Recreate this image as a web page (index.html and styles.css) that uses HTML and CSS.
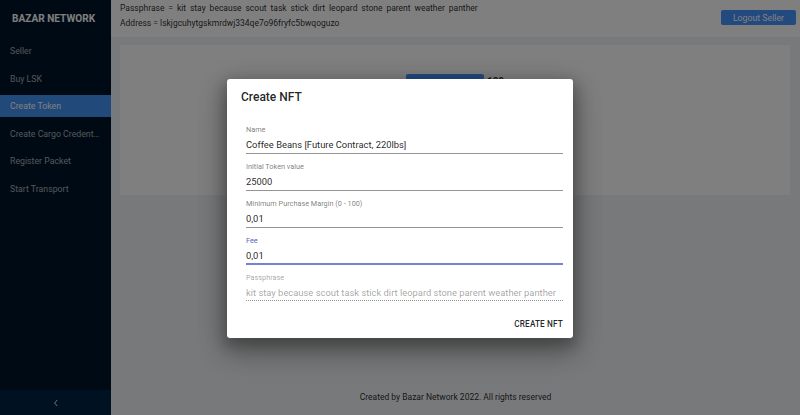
FILE: index.html
```html
<!DOCTYPE html>
<html>
<head>
<meta charset="utf-8">
<link rel="stylesheet" href="styles.css">
</head>
<body>
<div class="layout">
  <aside class="sider">
    <div class="logo">BAZAR NETWORK</div>
    <ul class="menu">
      <li class="item">Seller</li>
      <li class="item">Buy LSK</li>
      <li class="item selected">Create Token</li>
      <li class="item">Create Cargo Credentials</li>
      <li class="item">Register Packet</li>
      <li class="item">Start Transport</li>
    </ul>
    <div class="trigger">
      <svg width="8" height="8" viewBox="0 0 8 8"><path d="M5.2 1 L2.6 4 L5.2 7" fill="none" stroke="#fff" stroke-width="0.9"/></svg>
    </div>
  </aside>
  <div class="main">
    <header class="header">
      <div class="info">
        <div class="line pass">Passphrase = kit stay because scout task stick dirt leopard stone parent weather panther</div>
        <div class="line">Address = lskjgcuhytgskmrdwj334qe7o96fryfc5bwqoguzo</div>
      </div>
      <button class="logout">Logout Seller</button>
    </header>
    <main class="content">
      <div class="card">
        <div class="group">
          <button class="primary"></button>
          <span class="amount">100</span>
        </div>
      </div>
    </main>
    <footer class="footer">Created by Bazar Network 2022. All rights reserved</footer>
  </div>
</div>
<div class="backdrop">
  <div class="dialog">
    <h2 class="title">Create NFT</h2>
    <div class="dcontent">
      <div class="field">
        <div class="label">Name</div>
        <div class="input">Coffee Beans [Future Contract, 220lbs]</div>
      </div>
      <div class="field">
        <div class="label">Initial Token value</div>
        <div class="input">25000</div>
      </div>
      <div class="field">
        <div class="label">Minimum Purchase Margin (0 - 100)</div>
        <div class="input">0,01</div>
      </div>
      <div class="field focused">
        <div class="label">Fee</div>
        <div class="input">0,01</div>
      </div>
      <div class="field disabled">
        <div class="label">Passphrase</div>
        <div class="input">kit stay because scout task stick dirt leopard stone parent weather panther</div>
      </div>
    </div>
    <div class="actions">
      <button class="textbtn">Create NFT</button>
    </div>
  </div>
</div>
</body>
</html>
```
FILE: styles.css
```css
* { box-sizing: border-box; }
html, body { margin: 0; padding: 0; }
body {
  width: 800px;
  height: 415px;
  overflow: hidden;
  font-family: Roboto, "Liberation Sans", sans-serif;
  position: relative;
}
.layout { display: flex; height: 415px; }
.sider {
  width: 111px;
  background: #001529;
  display: flex;
  flex-direction: column;
}
.logo {
  height: 37px;
  padding-left: 12px;
  display: flex;
  align-items: center;
  color: #fff;
  font-weight: 700;
  font-size: 10.1px;
}
.menu { list-style: none; margin: 0; padding: 0; flex: 1; padding-top: 3px; }
.item {
  height: 22px;
  line-height: 22px;
  margin-bottom: 5.5px;
  padding: 0 10px;
  font-size: 8.75px;
  color: rgba(255,255,255,0.65);
  white-space: nowrap;
  overflow: hidden;
  text-overflow: ellipsis;
}
.item.selected { background: #4392f5; color: #fff; }
.trigger {
  height: 25px;
  background: #002244;
  display: flex;
  align-items: center;
  justify-content: center;
}
.main { flex: 1; display: flex; flex-direction: column; background: #f0f2f5; }
.header {
  height: 37px;
  background: #fff;
  display: flex;
  justify-content: space-between;
  padding: 0 4px 0 9px;
}
.info { padding-top: 1px; }
.line {
  font-size: 8.5px;
  color: rgba(0,0,0,0.85);
  line-height: 14.5px;
}
.pass { word-spacing: 1.8px; }
.logout {
  margin-top: 10px;
  width: 75px;
  height: 15px;
  border: 0;
  border-radius: 2px;
  background: #4694ff;
  color: #fff;
  font-family: inherit;
  font-size: 8.75px;
  padding: 0;
}
.content { flex: 1; padding: 8px 10px 0 9px; }
.card {
  height: 150px;
  background: #fff;
  display: flex;
  justify-content: center;
  padding-top: 29px;
}
.group { display: flex; align-items: flex-start; gap: 3px; }
.primary { width: 78px; height: 20px; border: 0; background: #4694ff; border-radius: 2px; }
.amount { font-size: 10px; font-weight: 700; color: rgba(0,0,0,0.85); line-height: 12px; padding-top: 1.5px; }
.footer {
  height: 28px;
  text-align: center;
  font-size: 8.5px;
  line-height: 10px;
  color: rgba(0,0,0,0.85);
  padding-top: 5px;
}
.backdrop {
  position: absolute;
  inset: 0;
  background: rgba(0,0,0,0.5);
  display: flex;
  align-items: center;
  justify-content: center;
  padding-top: 2px;
}
.dialog {
  width: 346px;
  height: 259px;
  background: #fff;
  border-radius: 3px;
  box-shadow: 0 7px 24px 3px rgba(0,0,0,0.25), 0 15px 30px 2px rgba(0,0,0,0.16), 0 6px 12px 3px rgba(0,0,0,0.14);
  display: flex;
  flex-direction: column;
}
.title {
  margin: 0;
  padding: 8px 14px 0;
  font-size: 12px;
  font-weight: 500;
  line-height: 20px;
  color: rgba(0,0,0,0.87);
}
.dcontent { padding: 18px 10px 0 19px; }
.field { margin-bottom: 8px; }
.label {
  font-size: 7.3px;
  line-height: 10px;
  height: 10px;
  color: rgba(0,0,0,0.54);
}
.input {
  font-size: 9.4px;
  line-height: 12px;
  padding: 3.5px 0 2.5px;
  color: rgba(0,0,0,0.87);
  border-bottom: 1px solid rgba(0,0,0,0.42);
  white-space: nowrap;
}
.focused .label { color: #5565c0; }
.focused .input { border-bottom: 2px solid #7382d2; padding-bottom: 1.5px; }
.disabled .label, .disabled .input { color: rgba(0,0,0,0.38); }
.disabled .input { border-bottom: 1px dotted rgba(0,0,0,0.42); padding-bottom: 1px; }
.actions {
  margin-top: auto;
  display: flex;
  justify-content: flex-end;
  padding: 0 5px 4px;
}
.textbtn {
  border: 0;
  background: transparent;
  font-family: inherit;
  font-size: 8.2px;
  font-weight: 500;
  text-transform: uppercase;
  letter-spacing: 0.02em;
  color: rgba(0,0,0,0.87);
  padding: 4px 5px;
  line-height: 12px;
}
```
